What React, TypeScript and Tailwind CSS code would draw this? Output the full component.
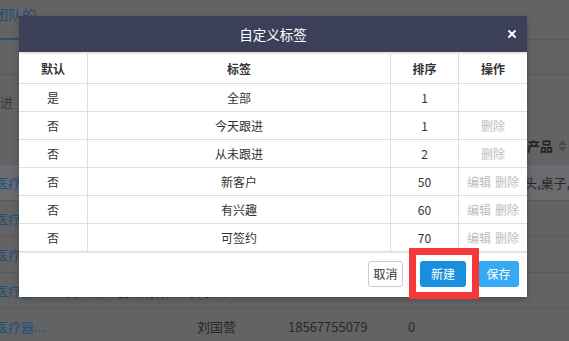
import React from 'react';
import { X } from 'lucide-react';

type Tag = { def: string; name: string; sort: number; edit: boolean; del: boolean };

const tags: Tag[] = [
  { def: '是', name: '全部', sort: 1, edit: false, del: false },
  { def: '否', name: '今天跟进', sort: 1, edit: false, del: true },
  { def: '否', name: '从未跟进', sort: 2, edit: false, del: true },
  { def: '否', name: '新客户', sort: 50, edit: true, del: true },
  { def: '否', name: '有兴趣', sort: 60, edit: true, del: true },
  { def: '否', name: '可签约', sort: 70, edit: true, del: true },
];

const bgRows = [
  { product: '医疗器', company: '', owner: '', phone: '', count: '', extra: '头,桌子,音箱', active: true },
  { product: '医疗器', company: '', owner: '', phone: '', count: '', extra: '', active: false },
  { product: '医疗器', company: '', owner: '', phone: '', count: '', extra: '', active: false },
  { product: '医疗器', company: '杭州精工器械有限公司', owner: '何佳佳', phone: '', count: '', extra: '', active: false },
  { product: '医疗器...', company: '', owner: '刘国营', phone: '18567755079', count: '0', extra: '', active: false },
];

const font = 'font-["Noto_Sans_CJK_SC","Open_Sans",sans-serif]';

function BackgroundPage() {
  return (
    <div className="-ml-[5px] w-[600px]">
      <div className="flex h-[40px] border-b border-[#595959]">
        <div className="-mb-px flex h-[40px] w-[44px] items-start border-b-2 border-[#24527e] pt-[5px] text-[14px] leading-[18px] text-[#22507c]">
          <span className="-ml-[1px]">团队的</span>
        </div>
      </div>
      <div className="h-[35px] border-b border-[#595959]" />
      <div className="flex h-[52px] items-center pt-[2px] text-[13px] text-[#3a3a3a]">
        <span className="-ml-[8px]">跟进</span>
      </div>
      <div className="grid h-[38px] grid-cols-[70px_132px_91px_120px_119px_1fr] items-center text-[13px] font-bold text-[#1f1f1f]">
        <span />
        <span />
        <span />
        <span />
        <span />
        <span className="flex items-center gap-[5px]">
          产品
          <svg width="9" height="12" viewBox="0 0 9 12">
            <path d="M4.5 0.5 L8.5 5 L0.5 5 Z" fill="#4b4b4b" />
            <path d="M4.5 11.5 L8.5 7 L0.5 7 Z" fill="#4b4b4b" />
          </svg>
        </span>
      </div>
      {bgRows.map((r, i) => (
        <div
          key={i}
          className={`grid h-[36px] grid-cols-[70px_132px_91px_120px_119px_1fr] items-center border-b border-[#595959] text-[13px] text-[#282828] ${
            r.active ? 'bg-[#696b6f]' : ''
          }`}
        >
          <span className="text-[#22507c]">{r.product}</span>
          <span>{r.company}</span>
          <span>{r.owner}</span>
          <span>{r.phone}</span>
          <span>{r.count}</span>
          <span className="-ml-[3px] whitespace-nowrap">{r.extra}</span>
        </div>
      ))}
    </div>
  );
}

function TagModal() {
  return (
    <div className="absolute left-[19px] top-[16px] w-[508px] bg-white shadow-[0_2px_6px_rgba(0,0,0,0.25)]">
      <div className="relative flex h-[36px] items-center justify-center bg-[#3c3f58] text-[13.5px] text-white">
        自定义标签
        <button className="absolute right-[9px] top-[12px] text-white">
          <X size={12} strokeWidth={4} />
        </button>
      </div>
      <div className="border-t-2 border-[#e6e6e6] text-[12px] text-[#333]">
        <div className="grid h-[30px] grid-cols-[69px_303px_68px_68px] border-b border-[#dedede] font-bold">
          <div className="flex items-center justify-center border-r border-[#dedede]">默认</div>
          <div className="flex items-center justify-center border-r border-[#dedede]">标签</div>
          <div className="flex items-center justify-center border-r border-[#dedede]">排序</div>
          <div className="flex items-center justify-center">操作</div>
        </div>
        {tags.map((t, i) => (
          <div key={i} className="grid h-[28px] grid-cols-[69px_303px_68px_68px] border-b border-[#dedede]">
            <div className="flex items-center justify-center border-r border-[#dedede]">{t.def}</div>
            <div className="flex items-center justify-center border-r border-[#dedede]">{t.name}</div>
            <div className="flex items-center justify-center border-r border-[#dedede]">{t.sort}</div>
            <div className="flex items-center justify-center gap-[4px] text-[#bdbdbd]">
              {t.edit && <span>编辑</span>}
              {t.del && <span>删除</span>}
            </div>
          </div>
        ))}
      </div>
      <div className="flex h-[45px] items-start justify-end border-t border-[#e8e8e8] pr-[8px] pt-[8px] text-[12px]">
        <button className="h-[26px] w-[35px] rounded-[3px] border border-[#cccccc] bg-white text-[#333]">取消</button>
        <button className="ml-[17px] h-[26px] w-[46px] rounded-[3px] bg-[#1a8fe0] text-white">新建</button>
        <button className="ml-[12px] h-[26px] w-[41px] rounded-[3px] bg-[#36a9f4] text-white">保存</button>
      </div>
    </div>
  );
}

export default function App() {
  return (
    <div className={`relative h-[341px] w-[569px] overflow-hidden bg-[#636363] ${font}`}>
      <BackgroundPage />
      <TagModal />
      {/* highlight annotation */}
      <div className="pointer-events-none absolute left-[409px] top-[248px] h-[51px] w-[70px] border-[7px] border-[#f53838]" />
    </div>
  );
}
